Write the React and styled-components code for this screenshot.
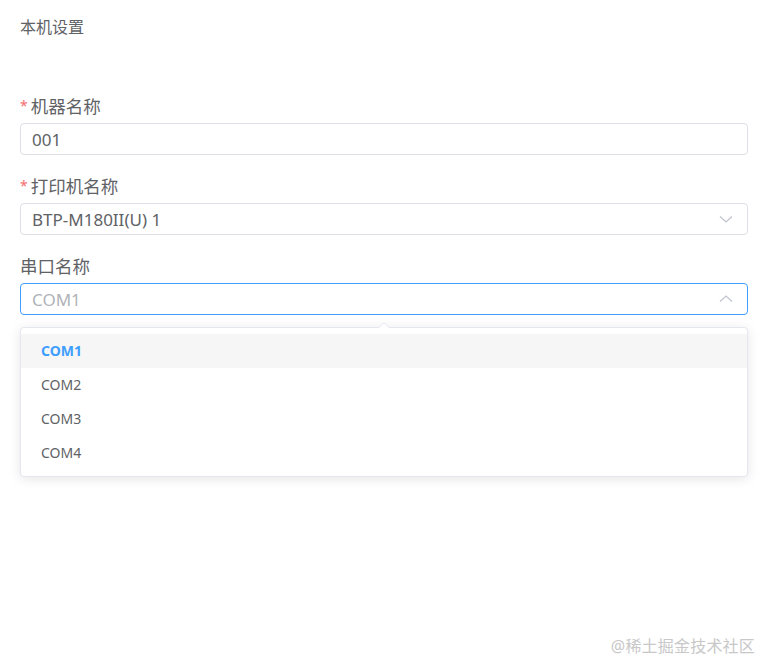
import React, { useState } from "react";
import styled, { createGlobalStyle } from "styled-components";

const GlobalStyle = createGlobalStyle`
  html, body {
    margin: 0;
    padding: 0;
    background: #fff;
    font-family: "Noto Sans", "Noto Sans CJK SC", sans-serif;
  }
  * { box-sizing: border-box; }
`;

const Page = styled.div`
  position: relative;
  width: 761px;
  height: 662px;
  padding: 17px 13px 0 20px;
  overflow: hidden;
`;

const Title = styled.div`
  font-size: 16px;
  line-height: 20px;
  color: #606266;
`;

const Form = styled.div`
  margin-top: 52px;
  width: 728px;
`;

const Label = styled.div`
  display: flex;
  align-items: center;
  height: 32px;
  margin-top: 14px;
  margin-bottom: 2px;
  font-size: 17.5px;
  color: #606266;
`;

const Star = styled.span`
  color: #f56c6c;
  font-size: 14px;
  margin-right: 3px;
`;

const Field = styled.div`
  position: relative;
  height: 32px;
  border: 1px solid ${(p) => (p.$focus ? "#409eff" : "#dcdfe6")};
  border-radius: 4px;
  display: flex;
  align-items: center;
  padding: 0 11px;
  font-size: 17px;
  color: ${(p) => (p.$placeholder ? "#b0b3b8" : "#606266")};
  cursor: ${(p) => (p.$select ? "pointer" : "text")};
`;

const Value = styled.span`
  flex: 1;
`;

const Chevron = styled.svg`
  width: 14px;
  height: 14px;
  margin-right: 3px;
  stroke: #c0c4cc;
  fill: none;
  stroke-width: 1.2;
`;

const SelectWrap = styled.div`
  position: relative;
`;

const Dropdown = styled.div`
  position: absolute;
  top: 44px;
  left: 0;
  right: 0;
  background: #fff;
  border: 1px solid #e4e7ed;
  border-radius: 4px;
  box-shadow: 0 2px 12px 0 rgba(0, 0, 0, 0.1);
  padding: 6px 0;
  z-index: 10;

  &::before {
    content: "";
    position: absolute;
    top: -6px;
    left: 50%;
    margin-left: -6px;
    border-width: 0 6px 6px;
    border-style: solid;
    border-color: transparent transparent #e4e7ed;
  }
  &::after {
    content: "";
    position: absolute;
    top: -5px;
    left: 50%;
    margin-left: -6px;
    border-width: 0 6px 6px;
    border-style: solid;
    border-color: transparent transparent #fff;
  }
`;

const Option = styled.div`
  height: 34px;
  line-height: 34px;
  padding: 0 20px;
  font-size: 14px;
  color: ${(p) => (p.$selected ? "#409eff" : "#606266")};
  font-weight: ${(p) => (p.$selected ? 700 : 400)};
  background: ${(p) => (p.$hover ? "#f6f6f6" : "transparent")};
  cursor: pointer;
`;

const Watermark = styled.div`
  position: absolute;
  right: 6px;
  bottom: 5px;
  font-size: 16px;
  color: #c8c8c8;
  letter-spacing: 0.2px;
`;

const Down = () => (
  <Chevron viewBox="0 0 14 14">
    <polyline points="1,4.5 7,10 13,4.5" />
  </Chevron>
);

const Up = () => (
  <Chevron viewBox="0 0 14 14">
    <polyline points="1,9.5 7,4 13,9.5" />
  </Chevron>
);

const App = () => {
  const [port, setPort] = useState("COM1");
  const ports = ["COM1", "COM2", "COM3", "COM4"];

  return (
    <Page>
      <GlobalStyle />
      <Title>本机设置</Title>
      <Form>
        <Label>
          <Star>*</Star>机器名称
        </Label>
        <Field>
          <Value>001</Value>
        </Field>

        <Label>
          <Star>*</Star>打印机名称
        </Label>
        <Field $select>
          <Value>BTP-M180II(U) 1</Value>
          <Down />
        </Field>

        <Label>串口名称</Label>
        <SelectWrap>
          <Field $select $focus $placeholder>
            <Value>{port}</Value>
            <Up />
          </Field>
          <Dropdown>
            {ports.map((p, i) => (
              <Option
                key={p}
                $selected={p === port}
                $hover={i === 0}
                onClick={() => setPort(p)}
              >
                {p}
              </Option>
            ))}
          </Dropdown>
        </SelectWrap>
      </Form>
      <Watermark>@稀土掘金技术社区</Watermark>
    </Page>
  );
};

export default App;
